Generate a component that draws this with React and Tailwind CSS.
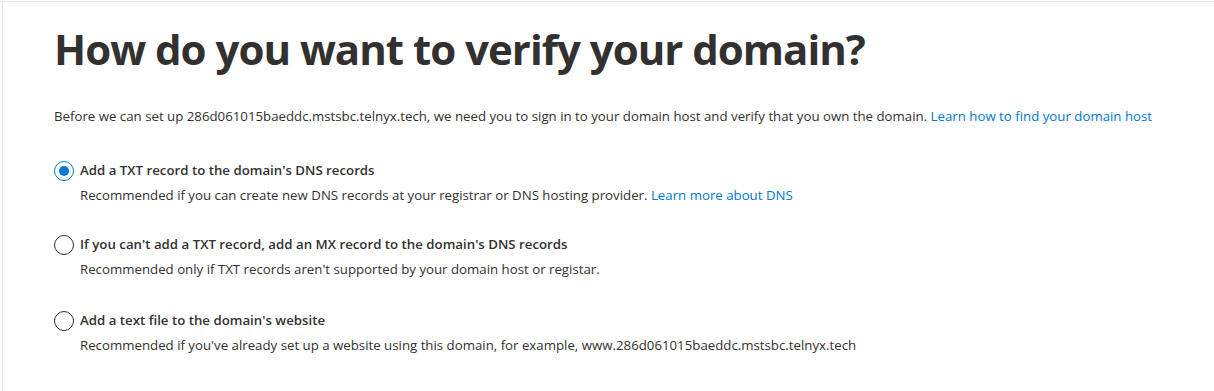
import React from "react";

const font = { fontFamily: '"Open Sans", "Noto Sans", sans-serif' };

function Radio({ checked }) {
  return (
    <span className="flex h-[20px] w-[20px] shrink-0 items-center justify-center rounded-full border border-[#323130] bg-white data-[c=true]:border-[#0078d4]" data-c={checked ? "true" : "false"}>
      {checked && <span className="h-[10px] w-[10px] rounded-full bg-[#0078d4]" />}
    </span>
  );
}

function Option({ checked, title, children, className = "" }) {
  return (
    <div className={"flex flex-col " + className}>
      <div className="flex items-center gap-[6px]">
        <Radio checked={checked} />
        <span className="text-[13.25px] font-semibold text-[#323130]">{title}</span>
      </div>
      <div className="mt-[5px] pl-[26px] text-[13.25px] text-[#323130]">{children}</div>
    </div>
  );
}

export default function App() {
  return (
    <div className="min-h-[391px] bg-white pt-px" style={font}>
      <div className="min-h-[390px] border-t border-[#e6e6e6]">
        <div className="ml-[2px] min-h-[389px] border-l border-[#e6e6e6] pl-[51px] pt-[21px]">
          <h1 className="text-[42px] font-bold leading-[52px] tracking-[-1px] text-[#323130]">
            How do you want to verify your domain?
          </h1>
          <p className="mt-[31px] text-[13.25px] leading-[20px] text-[#323130]">
            Before we can set up 286d061015baeddc.mstsbc.telnyx.tech, we need you to sign in to your domain host and verify that you own the domain.{" "}
            <span className="text-[#0078d4]">Learn how to find your domain host</span>
          </p>
          <div className="mt-[35px] flex flex-col">
            <Option checked title="Add a TXT record to the domain's DNS records">
              Recommended if you can create new DNS records at your registrar or DNS hosting provider.{" "}
              <span className="text-[#0078d4]">Learn more about DNS</span>
            </Option>
            <Option className="mt-[29px]" title="If you can't add a TXT record, add an MX record to the domain's DNS records">
              Recommended only if TXT records aren't supported by your domain host or registar.
            </Option>
            <Option className="mt-[31px]" title="Add a text file to the domain's website">
              Recommended if you've already set up a website using this domain, for example, www.286d061015baeddc.mstsbc.telnyx.tech
            </Option>
          </div>
        </div>
      </div>
    </div>
  );
}
